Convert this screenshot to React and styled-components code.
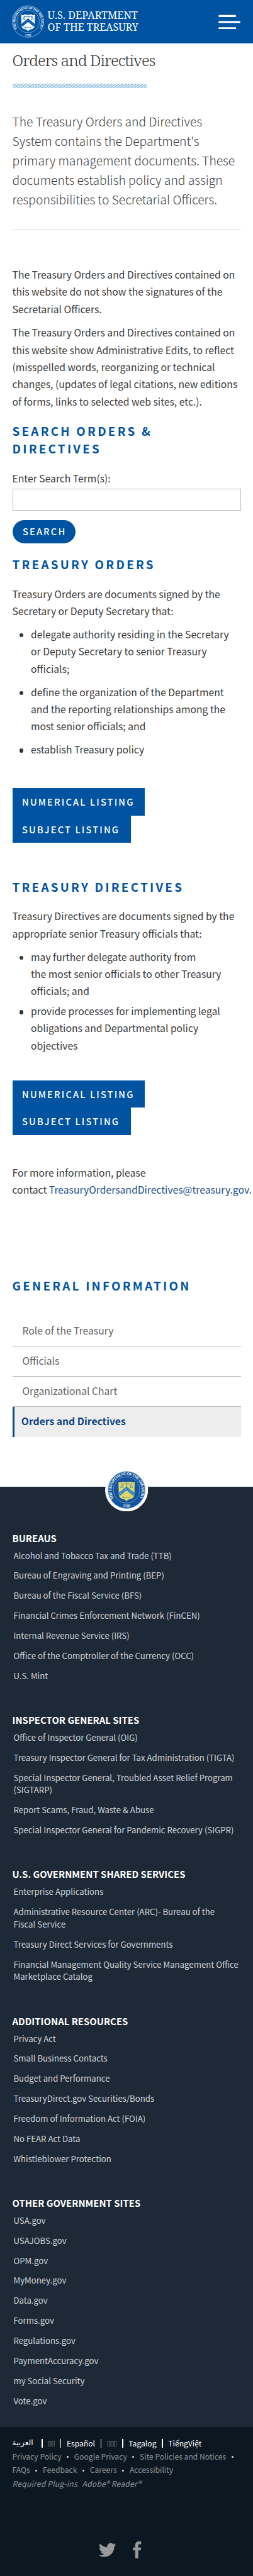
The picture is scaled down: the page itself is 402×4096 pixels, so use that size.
import React from 'react';
import styled, { createGlobalStyle, css } from 'styled-components';

// Design units are for a 412px wide layout; u() scales them to the 402px page.
const u = (n) => `${(n * 0.975).toFixed(3)}px`;

const sans = '"Noto Sans CJK SC", "Open Sans", sans-serif';
const serif = '"Noto Serif", "DejaVu Serif", serif';
const blue = '#0053a1';

const GlobalStyle = createGlobalStyle`
  *, *::before, *::after { box-sizing: border-box; }
  body { margin: 0; background: #fff; color: #3a3a3a; font-family: ${sans}; }
  h1, h2, h3, p, ul { margin: 0; padding: 0; font-weight: 400; }
  a { color: inherit; text-decoration: none; }
`;

const Page = styled.div`
  display: flex;
  flex-direction: column;
  min-height: 4096px;
  width: 402px;
`;

const Header = styled.header`
  display: flex;
  align-items: center;
  justify-content: space-between;
  height: ${u(71)};
  padding: 0 ${u(20)} 0 ${u(19)};
  background: ${blue};
`;

const Main = styled.main`
  padding: ${u(9.5)} ${u(20)} 0;
`;

const Title = styled.h1`
  font-family: ${serif};
  font-weight: 300;
  font-size: ${u(25.2)};
  line-height: ${u(36)};
  letter-spacing: ${u(-0.9)};
  color: #333;
  white-space: nowrap;
`;

const Stripe = styled.div`
  width: ${u(218.5)};
  height: ${u(8)};
  margin-top: ${u(19.5)};
  background: repeating-linear-gradient(144deg, #8fbbdc 0 1.2px, #dcebf5 1.2px 3.2px);
`;

const Lead = styled.p`
  margin-top: ${u(39.1)};
  padding-bottom: ${u(31.1)};
  border-bottom: 2px solid #ececec;
  font-weight: 300;
  font-size: ${u(19.8)};
  line-height: ${u(31.75)};
  color: #3c3c3c;
  white-space: nowrap;
`;

const Text = styled.p`
  margin-top: ${(p) => u(p.$gap)};
  font-size: ${u(16.1)};
  line-height: ${u(28)};
  white-space: nowrap;
`;

const Heading = styled.h2`
  margin-top: ${(p) => u(p.$gap)};
  font-weight: 700;
  font-size: ${u(19.3)};
  line-height: ${u(29)};
  letter-spacing: ${u(3.35)};
  text-transform: uppercase;
  white-space: nowrap;
  color: ${blue};
`;

const SearchForm = styled.form`
  display: flex;
  flex-direction: column;
  align-items: flex-start;
  margin-top: ${u(19.9)};
`;

const Label = styled.label`
  font-size: ${u(16.1)};
  line-height: ${u(28)};
`;

const Input = styled.input`
  width: 100%;
  height: ${u(36)};
  margin-top: ${u(3)};
  border: 1px solid #bfbfbf;
  border-radius: 0;
  background: #fff;
`;

const buttonText = css`
  border: 0;
  background: ${blue};
  color: #fff;
  font-family: ${sans};
  font-weight: 500;
  font-size: ${u(15)};
  letter-spacing: ${u(2.2)};
  text-transform: uppercase;
`;

const SearchButton = styled.button`
  ${buttonText}
  width: ${u(103)};
  height: ${u(38)};
  margin-top: ${u(15.2)};
  padding: 0 0 ${u(0.6)} ${u(2)};
  border-radius: ${u(19)};
`;

const Listings = styled.div`
  display: flex;
  flex-direction: column;
  align-items: flex-start;
  margin-top: ${(p) => u(p.$gap)};
`;

const ListingLink = styled.a`
  ${buttonText}
  width: ${(p) => u(p.$width)};
  padding: 0 0 0 ${u(16)};
  line-height: ${u(44.6)};
  white-space: nowrap;
`;

const Bullets = styled.ul`
  display: flex;
  flex-direction: column;
  gap: ${(p) => u(p.$gap)};
  margin-top: ${u(10.2)};
  list-style: none;
`;

const Bullet = styled.li`
  display: grid;
  grid-template-columns: ${u(30.3)} 1fr;
  font-size: ${u(16.1)};
  line-height: ${u(28)};
  white-space: nowrap;

  &::before {
    content: '';
    width: ${u(6.4)};
    height: ${u(6.4)};
    margin: ${u(12.4)} 0 0 ${u(11.8)};
    border-radius: 50%;
    background: #333;
  }
`;

const MailLink = styled.a`
  color: #1b5088;
`;

const SideNav = styled.nav`
  display: flex;
  flex-direction: column;
  margin-top: ${u(35.6)};
`;

const SideLink = styled.a`
  height: ${u(49.3)};
  padding: ${u(9.2)} 0 0 ${(p) => u(p.$active ? 11.6 : 16.3)};
  border-bottom: ${(p) => (p.$active ? '0' : '1px solid #b8b8b8')};
  border-left: ${(p) => (p.$active ? `${u(4)} solid #004b87` : '0')};
  background: ${(p) => (p.$active ? '#eeeeee' : 'transparent')};
  color: ${(p) => (p.$active ? '#0b4380' : '#636363')};
  font-weight: ${(p) => (p.$active ? 700 : 400)};
  font-size: ${u(16.1)};
  line-height: ${u(28)};
`;

const Footer = styled.footer`
  display: flex;
  flex: 1;
  flex-direction: column;
  margin-top: ${u(80.9)};
  background: #1e2938;
`;

const FooterSeal = styled.div`
  align-self: center;
  width: ${u(70)};
  height: ${u(70)};
  margin: ${u(-30)} 0 ${u(32.3)};
  line-height: 0;
`;

const FooterGroups = styled.div`
  display: flex;
  flex-direction: column;
  gap: ${u(50.6)};
  padding: 0 ${u(20)} ${u(32.2)};
`;

const GroupTitle = styled.h3`
  margin-bottom: ${u(7.7)};
  color: #fff;
  font-weight: 700;
  font-size: ${u(15.3)};
  line-height: ${u(22)};
  white-space: nowrap;
`;

const GroupLinks = styled.div`
  display: flex;
  flex-direction: column;
  gap: ${u(12.4)};
  padding-left: ${u(2)};
  color: #ced3d7;
  font-size: ${u(13.55)};
  line-height: ${u(20.3)};
  white-space: nowrap;
`;

const Legal = styled.div`
  display: flex;
  flex: 1;
  flex-direction: column;
  padding: ${u(15)} ${u(20)} 0;
  background: #0c1821;
  color: #8b9297;
  font-size: ${u(12.45)};
  line-height: ${u(22)};
  white-space: nowrap;
`;

const LegalRow = styled.div`
  display: flex;
  height: ${u(22)};
  gap: ${(p) => u(p.$gap || 0)};
  color: ${(p) => (p.$bright ? '#fff' : 'inherit')};
  font-style: ${(p) => (p.$italic ? 'italic' : 'normal')};
  letter-spacing: ${(p) => u(p.$italic ? 0.2 : 0)};
`;

const Bar = styled.span`
  width: 1.3px;
  height: ${u(14)};
  margin: ${u(5)} ${u(9)} 0;
  background: #fff;
`;

const Dot = styled.span`
  width: 3px;
  height: 3px;
  margin: ${u(10.5)} ${u(8.9)} 0;
  border-radius: 50%;
  background: #d8dcde;
`;

const Arabic = styled.a`
  width: ${u(39)};
  font-family: "DejaVu Sans", sans-serif;
  font-size: ${u(12.4)};
`;

const Boxes = styled.a`
  width: ${(p) => u(p.$width)};
  overflow: hidden;
  color: #9ba1a5;
  font-family: "DejaVu Sans", sans-serif;
  font-size: ${u(11)};
  letter-spacing: ${u(-0.8)};
`;

const Social = styled.div`
  display: flex;
  align-items: center;
  justify-content: center;
  gap: ${u(27.5)};
  margin: ${u(84)} ${u(21)} 0 0;
  line-height: 0;
  color: #999;
`;

const SHIELD = 'M17 17 Q21 19 24 16.5 Q30 18.5 36 16.5 Q39 19 43 17 L42.5 36 Q42.5 43.5 36 44.5 Q32 45 30 48 Q28 45 24 44.5 Q17.5 43.5 17.5 36 Z';

function Seal({ id, ink, field, shield, line, rim }) {
  return (
    <>
      <circle cx="30" cy="30" r="29.5" fill={field} stroke={rim} strokeWidth="1" />
      <circle cx="30" cy="30" r="21" fill="none" stroke={rim} strokeWidth="0.8" />
      <path id={`${id}-arc`} d="M10.4 44.6 A24.2 24.2 0 1 1 49.6 44.6" fill="none" />
      <path id={`${id}-year`} d="M18 54.8 A28 28 0 0 0 42 54.8" fill="none" />
      <text fill={ink} fontFamily="Liberation Serif, serif" fontWeight="700" fontSize="6.4">
        <textPath href={`#${id}-arc`} textLength="103" startOffset="1">THE DEPARTMENT OF THE TREASURY</textPath>
      </text>
      <text fill={ink} fontFamily="Liberation Serif, serif" fontWeight="700" fontSize="6">
        <textPath href={`#${id}-year`} startOffset="50%" textAnchor="middle">1789</textPath>
      </text>
      <path d={SHIELD} fill={shield} />
      <path d="M17.8 37.5 L30 27.5 L42.2 37.5" fill="none" stroke={line} strokeWidth="5" />
      <path d="M18 37.5 L30 27.8 L42 37.5" fill="none" stroke={ink} strokeWidth="0.8" strokeDasharray="1 1.6" />
      <path d="M22 20.5 H38 M30 19 V25 M20.3 26 L22.5 21 L24.7 26 Z M35.3 26 L37.5 21 L39.7 26 Z M23 41.5 H36.5 M24.5 39.8 V43" fill="none" stroke={line} strokeWidth="0.9" />
    </>
  );
}

function BrandLogo() {
  return (
    <svg width={207 * 0.975} height={54 * 0.975} viewBox="0 0 207 54" role="img" aria-label="U.S. Department of the Treasury">
      <g transform="translate(0.2 0.8) scale(0.87)">
        <Seal id="brand" ink="#e6f1fb" field={blue} shield="#f4faff" line={blue} rim="#9fc4e6" />
      </g>
      <g fill="#fff" fontFamily='"Noto Serif", serif' fontSize="15.9">
        <text x="58" y="22.8" textLength="147" lengthAdjust="spacingAndGlyphs">U.S. DEPARTMENT</text>
        <text x="58" y="41.8" textLength="148" lengthAdjust="spacingAndGlyphs">OF THE TREASURY</text>
      </g>
    </svg>
  );
}

function MenuIcon() {
  return (
    <svg width={36 * 0.975} height={24 * 0.975} viewBox="0 0 36 24" aria-label="Menu">
      <path d="M1.6 2.4 H27.4 M1.6 12.4 H34.4 M1.6 22.4 H27.4" stroke="#fff" strokeWidth="3.2" strokeLinecap="round" />
    </svg>
  );
}

function TwitterIcon() {
  return (
    <svg width={28 * 0.975} height={28 * 0.975} viewBox="0 0 24 24" fill="currentColor" aria-label="Twitter">
      <path d="M23.954 4.569a10 10 0 0 1-2.825.775 4.958 4.958 0 0 0 2.163-2.723 9.99 9.99 0 0 1-3.127 1.184 4.92 4.92 0 0 0-8.384 4.482C7.691 8.094 4.066 6.13 1.64 3.161a4.822 4.822 0 0 0-.666 2.475c0 1.71.87 3.213 2.188 4.096a4.904 4.904 0 0 1-2.228-.616v.061a4.923 4.923 0 0 0 3.946 4.827 4.996 4.996 0 0 1-2.212.085 4.937 4.937 0 0 0 4.604 3.417 9.868 9.868 0 0 1-6.102 2.105c-.39 0-.779-.023-1.17-.067a13.995 13.995 0 0 0 7.557 2.209c9.054 0 13.999-7.496 13.999-13.986 0-.209 0-.42-.015-.63a9.936 9.936 0 0 0 2.46-2.548z" />
    </svg>
  );
}

function FacebookIcon() {
  return (
    <svg width={14 * 0.975} height={28 * 0.975} viewBox="0 0 14 28" fill="currentColor" aria-label="Facebook">
      <path d="M13.6 0.2 V4.6 H11 C9.1 4.6 8.9 5.5 8.9 6.8 V9.9 H13.6 L13 14.6 H8.9 V28 H4 V14.6 H0 V9.9 H4 V6.3 C4 2.3 6.4 0 10 0 C11.7 0 13.1 0.1 13.6 0.2 Z" />
    </svg>
  );
}

const lines = (list) => list.map((t, i) => (
  <React.Fragment key={t}>{i > 0 && <br />}{t}</React.Fragment>
));

const GROUPS = [
  ['BUREAUS', [
    ['Alcohol and Tobacco Tax and Trade (TTB)'],
    ['Bureau of Engraving and Printing (BEP)'],
    ['Bureau of the Fiscal Service (BFS)'],
    ['Financial Crimes Enforcement Network (FinCEN)'],
    ['Internal Revenue Service (IRS)'],
    ['Office of the Comptroller of the Currency (OCC)'],
    ['U.S. Mint'],
  ]],
  ['INSPECTOR GENERAL SITES', [
    ['Office of Inspector General (OIG)'],
    ['Treasury Inspector General for Tax Administration (TIGTA)'],
    ['Special Inspector General, Troubled Asset Relief Program', '(SIGTARP)'],
    ['Report Scams, Fraud, Waste & Abuse'],
    ['Special Inspector General for Pandemic Recovery (SIGPR)'],
  ]],
  ['U.S. GOVERNMENT SHARED SERVICES', [
    ['Enterprise Applications'],
    ['Administrative Resource Center (ARC)- Bureau of the', 'Fiscal Service'],
    ['Treasury Direct Services for Governments'],
    ['Financial Management Quality Service Management Office', 'Marketplace Catalog'],
  ]],
  ['ADDITIONAL RESOURCES', [
    ['Privacy Act'],
    ['Small Business Contacts'],
    ['Budget and Performance'],
    ['TreasuryDirect.gov Securities/Bonds'],
    ['Freedom of Information Act (FOIA)'],
    ['No FEAR Act Data'],
    ['Whistleblower Protection'],
  ]],
  ['OTHER GOVERNMENT SITES', [
    ['USA.gov'], ['USAJOBS.gov'], ['OPM.gov'], ['MyMoney.gov'], ['Data.gov'],
    ['Forms.gov'], ['Regulations.gov'], ['PaymentAccuracy.gov'],
    ['my Social Security'], ['Vote.gov'],
  ]],
];

function ListingButtons({ gap }) {
  return (
    <Listings $gap={gap}>
      <ListingLink $width={216}>Numerical Listing</ListingLink>
      <ListingLink $width={193}>Subject Listing</ListingLink>
    </Listings>
  );
}

export default function App() {
  return (
    <Page>
      <GlobalStyle />
      <Header>
        <BrandLogo />
        <MenuIcon />
      </Header>
      <Main>
        <Title>Orders and Directives</Title>
        <Stripe />
        <Lead>
          {lines([
            'The Treasury Orders and Directives',
            "System contains the Department's",
            'primary management documents. These',
            'documents establish policy and assign',
            'responsibilities to Secretarial Officers.',
          ])}
        </Lead>
        <Text $gap={59}>
          {lines([
            'The Treasury Orders and Directives contained on',
            'this website do not show the signatures of the',
            'Secretarial Officers.',
          ])}
        </Text>
        <Text $gap={10.7}>
          {lines([
            'The Treasury Orders and Directives contained on',
            'this website show Administrative Edits, to reflect',
            '(misspelled words, reorganizing or technical',
            'changes, (updates of legal citations, new editions',
            'of forms, links to selected web sites, etc.).',
          ])}
        </Text>
        <Heading $gap={19.3}>{lines(['Search Orders &', 'Directives'])}</Heading>
        <SearchForm>
          <Label htmlFor="term">Enter Search Term(s):</Label>
          <Input id="term" />
          <SearchButton type="button">Search</SearchButton>
        </SearchForm>
        <Heading $gap={19.2}>Treasury Orders</Heading>
        <Text $gap={20.3}>
          {lines(['Treasury Orders are documents signed by the', 'Secretary or Deputy Secretary that:'])}
        </Text>
        <Bullets $gap={10}>
          <Bullet><span>{lines(['delegate authority residing in the Secretary', 'or Deputy Secretary to senior Treasury', 'officials;'])}</span></Bullet>
          <Bullet><span>{lines(['define the organization of the Department', 'and the reporting relationships among the', 'most senior officials; and'])}</span></Bullet>
          <Bullet><span>establish Treasury policy</span></Bullet>
        </Bullets>
        <ListingButtons gap={49} />
        <Heading $gap={57.2}>Treasury Directives</Heading>
        <Text $gap={19.3}>
          {lines(['Treasury Directives are documents signed by the', 'appropriate senior Treasury officials that:'])}
        </Text>
        <Bullets $gap={4.6}>
          <Bullet><span>{lines(['may further delegate authority from', 'the most senior officials to other Treasury', 'officials; and'])}</span></Bullet>
          <Bullet><span>{lines(['provide processes for implementing legal', 'obligations and Departmental policy', 'objectives'])}</span></Bullet>
        </Bullets>
        <ListingButtons gap={42.8} />
        <Text $gap={47.3}>
          For more information, please<br />
          contact <MailLink>TreasuryOrdersandDirectives@treasury.gov.</MailLink>
        </Text>
        <Heading $gap={127.7}>General Information</Heading>
        <SideNav>
          <SideLink>Role of the Treasury</SideLink>
          <SideLink>Officials</SideLink>
          <SideLink>Organizational Chart</SideLink>
          <SideLink $active>Orders and Directives</SideLink>
        </SideNav>
      </Main>
      <Footer>
        <FooterSeal>
          <svg width={70 * 0.975} height={70 * 0.975} viewBox="0 0 70 70" role="img" aria-label="Treasury seal">
            <circle cx="35" cy="35" r="35" fill="#fff" />
            <g transform="translate(4.4 4.4) scale(1.02)">
              <Seal id="footer" ink="#eaf3fa" field="#14549b" shield="#e3d56a" line="#2f86c4" rim="#6fa6cf" />
            </g>
          </svg>
        </FooterSeal>
        <FooterGroups>
          {GROUPS.map(([title, items]) => (
            <section key={title}>
              <GroupTitle>{title}</GroupTitle>
              <GroupLinks>
                {items.map((item) => <a key={item[0]}>{lines(item)}</a>)}
              </GroupLinks>
            </section>
          ))}
        </FooterGroups>
        <Legal>
          <LegalRow $bright>
            <Arabic>العربية</Arabic><Bar />
            <Boxes $width={11}>▯▯</Boxes><Bar />
            <a>Español</a><Bar />
            <Boxes $width={16}>▯▯▯</Boxes><Bar />
            <a>Tagalog</a><Bar />
            <a>TiếngViệt</a>
          </LegalRow>
          <LegalRow>
            <a>Privacy Policy</a><Dot /><a>Google Privacy</a><Dot /><a>Site Policies and Notices</a><Dot />
          </LegalRow>
          <LegalRow>
            <a>FAQs</a><Dot /><a>Feedback</a><Dot /><a>Careers</a><Dot /><a>Accessibility</a>
          </LegalRow>
          <LegalRow $italic $gap={8}>
            <span>Required Plug-ins</span><a>Adobe® Reader®</a>
          </LegalRow>
          <Social>
            <TwitterIcon />
            <FacebookIcon />
          </Social>
        </Legal>
      </Footer>
    </Page>
  );
}
